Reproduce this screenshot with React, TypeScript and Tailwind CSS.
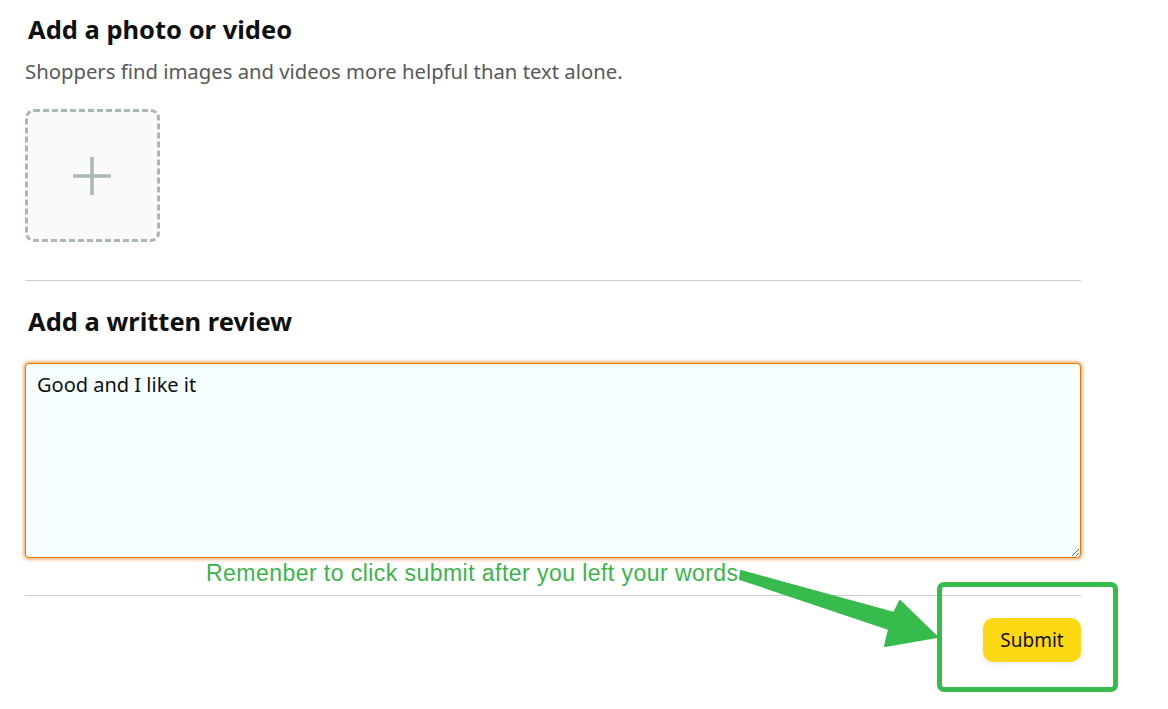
export default function App() {
  return (
    <div className="relative w-[1168px] h-[709px] bg-white overflow-hidden font-['Noto_Sans',sans-serif] text-[#0f1111]">
      <div className="w-[1081px] pl-[25px] pt-[13px]">
        <h2 className="pl-[3px] text-[25.5px] leading-[32px] font-bold">Add a photo or video</h2>
        <p className="mt-[14px] text-[20.3px] leading-[24px] text-[#565959]">
          Shoppers find images and videos more helpful than text alone.
        </p>
        <div className="mt-[26px] w-[135px] h-[133px] rounded-[9px] border-[3px] border-dashed border-[#aab7b8] bg-[#fafafa] flex items-center justify-center">
          <svg width="40" height="40" viewBox="0 0 40 40" className="mt-[1px] -ml-[1px]">
            <path d="M20 1v38M1 20h38" stroke="#aab7b8" strokeWidth="3.5" />
          </svg>
        </div>

        <hr className="mt-[38px] border-t border-[#cccccc]" />

        <h2 className="mt-[24px] pl-[3px] text-[25.5px] leading-[32px] font-bold">Add a written review</h2>
        <textarea
          defaultValue="Good and I like it"
          className="mt-[26px] block w-full h-[195px] rounded-[4px] border border-[#e77600] bg-[#f5fdff] px-[11px] py-[9px] text-[20px] leading-[24px] text-[#0f1111] outline-none shadow-[0_0_3px_2px_rgba(228,121,17,0.5)]"
        />
        <div className="h-[37px] pl-[181px] pt-[1px] font-['Liberation_Sans',Arial,sans-serif] text-[23px] tracking-[0.45px] leading-[28px] text-[#3ab54a]">
          Remenber to click submit after you left your words
        </div>
        <hr className="border-t border-[#cccccc]" />
        <div className="mt-[22px] flex justify-end">
          <button className="w-[98px] h-[44px] rounded-[10px] bg-[#ffd814] text-[19px] text-[#0f1111] shadow-[0_2px_5px_rgba(213,217,217,0.5)]">
            Submit
          </button>
        </div>
      </div>

      {/* annotation overlay */}
      <div className="absolute left-[937px] top-[582px] w-[181px] h-[110px] rounded-[7px] border-[5px] border-[#37bb4c]" />
      <svg className="absolute left-0 top-0 pointer-events-none" width="1168" height="709">
        <polygon
          points="741,571 894,613 900,601 937,637 885,646 889,629 740,579"
          fill="#37bb4c"
          stroke="#37bb4c"
          strokeWidth="2"
          strokeLinejoin="round"
        />
      </svg>
    </div>
  );
}
